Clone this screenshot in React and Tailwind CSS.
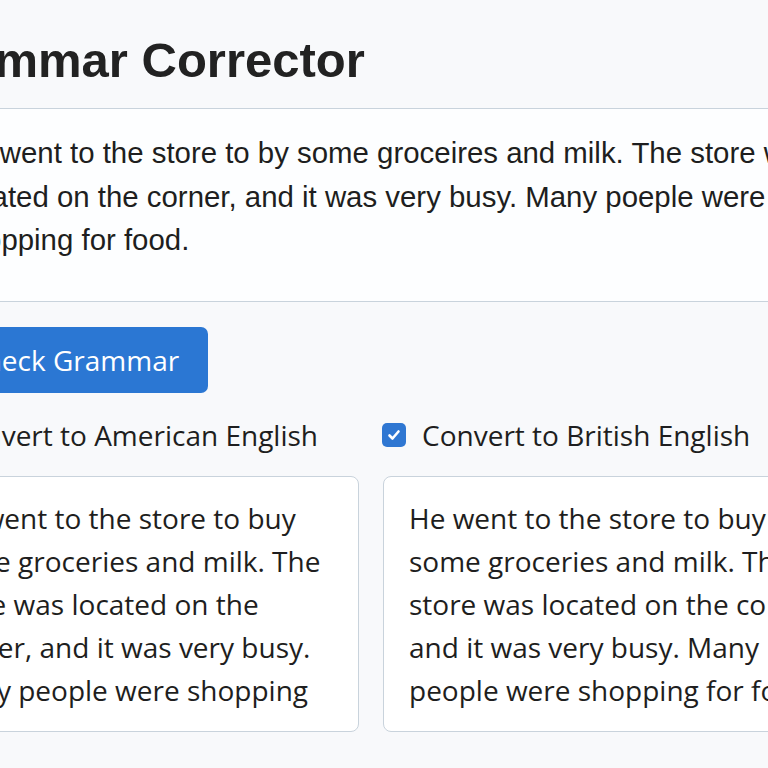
import { useState } from 'react'

const inputText =
  'He went to the store to by some groceires and milk. The store was located on the corner, and it was very busy. Many poeple were shopping for food.'

const outputText =
  'He went to the store to buy some groceries and milk. The store was located on the corner, and it was very busy. Many people were shopping for food.'

const Checkbox = ({ checked, onChange, label }) => (
  <label className="flex items-center gap-[16px] cursor-pointer">
    <span
      onClick={onChange}
      className={
        checked
          ? 'flex w-6 h-6 items-center justify-center rounded-[5px] bg-[#2f77d2]'
          : 'flex w-6 h-6 items-center justify-center rounded-[5px] border border-[#9aa4ae] bg-white'
      }
    >
      {checked && (
        <svg width="16" height="16" viewBox="0 0 16 16" fill="none">
          <path d="M3.5 8.5l3 3 6-7" stroke="white" strokeWidth="2.6" strokeLinecap="round" strokeLinejoin="round" />
        </svg>
      )}
    </span>
    <span>{label}</span>
  </label>
)

const App = () => {
  const [text, setText] = useState(inputText)
  const [american, setAmerican] = useState(false)
  const [british, setBritish] = useState(true)

  return (
    <div
      className="w-[768px] h-[768px] overflow-hidden bg-[#f8f9fb] text-[#1e1e20]"
      style={{ fontFamily: '"Open Sans", "Liberation Sans", sans-serif' }}
    >
      <div className="ml-[-69px] w-[930px] flex flex-col">
        {/* Header */}
        <h1 className="ml-[-21px] pt-[36px] mb-[23px] text-[49px] leading-[49px] font-bold text-[#222] font-['Liberation_Sans',Arial,sans-serif]">
          Grammar Corrector
        </h1>

        {/* Input */}
        <textarea
          value={text}
          onChange={(e) => setText(e.target.value)}
          spellCheck={false}
          className="w-full h-[194px] resize-none rounded-[6px] border border-[#c9d3dc] bg-[#fdfeff] px-[22px] pt-[22px] text-[29.4px] leading-[43.5px] outline-none font-['Liberation_Sans',Arial,sans-serif]"
        />

        <button className="self-start ml-[7px] mt-[25px] h-[66px] px-[29px] rounded-[7px] bg-[#2b77d3] text-white text-[28px]">
          Check Grammar
        </button>

        {/* Options */}
        <div className="mt-[21px] h-[42px] flex items-center gap-[64px] text-[28px] ml-[-21px]">
          <Checkbox checked={american} onChange={() => setAmerican(!american)} label="Convert to American English" />
          <Checkbox checked={british} onChange={() => setBritish(!british)} label="Convert to British English" />
        </div>

        {/* Results */}
        <div className="mt-[20px] flex gap-[24px] text-[28px] leading-[43px]">
          <div className="ml-[-18px] w-[446px] h-[256px] rounded-[8px] border border-[#c9d3dc] bg-white px-[25px] pt-[20px]">
            <div className="h-[215px] overflow-hidden">{outputText}</div>
          </div>
          <div className="w-[478px] h-[256px] rounded-[8px] border border-[#c9d3dc] bg-white px-[25px] pt-[20px]">
            <div className="h-[215px] overflow-hidden">{outputText}</div>
          </div>
        </div>
      </div>
    </div>
  )
}

export default App
